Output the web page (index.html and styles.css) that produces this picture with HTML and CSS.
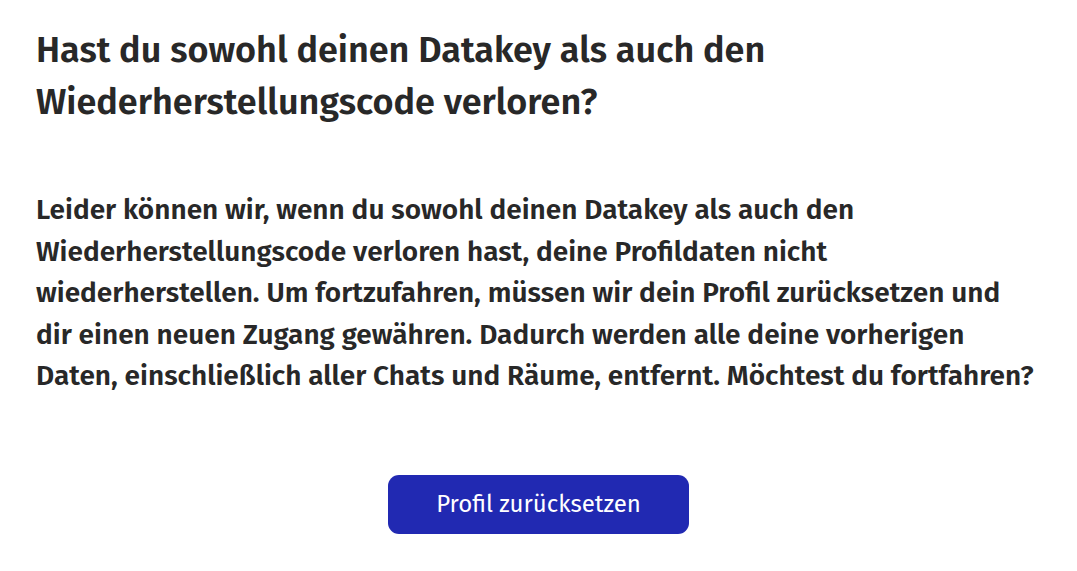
FILE: index.html
```html
<!DOCTYPE html>
<html lang="de">
<head>
<meta charset="utf-8">
<link rel="stylesheet" href="styles.css">
</head>
<body>
<main class="dialog">
  <h1 class="title">Hast du sowohl deinen Datakey als auch den Wiederherstellungscode verloren?</h1>
  <p class="text">Leider können wir, wenn du sowohl deinen Datakey als auch den Wiederherstellungscode verloren hast, deine Profildaten nicht wiederherstellen. Um fortzufahren, müssen wir dein Profil zurücksetzen und dir einen neuen Zugang gewähren. Dadurch werden alle deine vorherigen Daten, einschließlich aller Chats und Räume, entfernt. Möchtest du fortfahren?</p>
  <div class="actions">
    <button class="btn" type="button">Profil zurücksetzen</button>
  </div>
</main>
</body>
</html>
```
FILE: styles.css
```css
html, body {
  margin: 0;
  background: #ffffff;
}
.dialog {
  padding: 24px 36px 0 36px;
  font-family: "Fira Sans", Lato, sans-serif;
  color: #282828;
}
.title {
  margin: 0;
  font-size: 36px;
  font-weight: 600;
  line-height: 52px;
}
.text {
  margin: 61px 0 0 0;
  font-size: 28px;
  font-weight: 600;
  line-height: 41.5px;
}
.actions {
  display: flex;
  justify-content: center;
  margin-top: 78px;
}
.btn {
  width: 301px;
  height: 59px;
  border: none;
  border-radius: 11px;
  background: #2129b2;
  color: #ffffff;
  font-family: "Fira Sans", Lato, sans-serif;
  font-size: 24px;
  font-weight: 400;
  cursor: pointer;
}
```
